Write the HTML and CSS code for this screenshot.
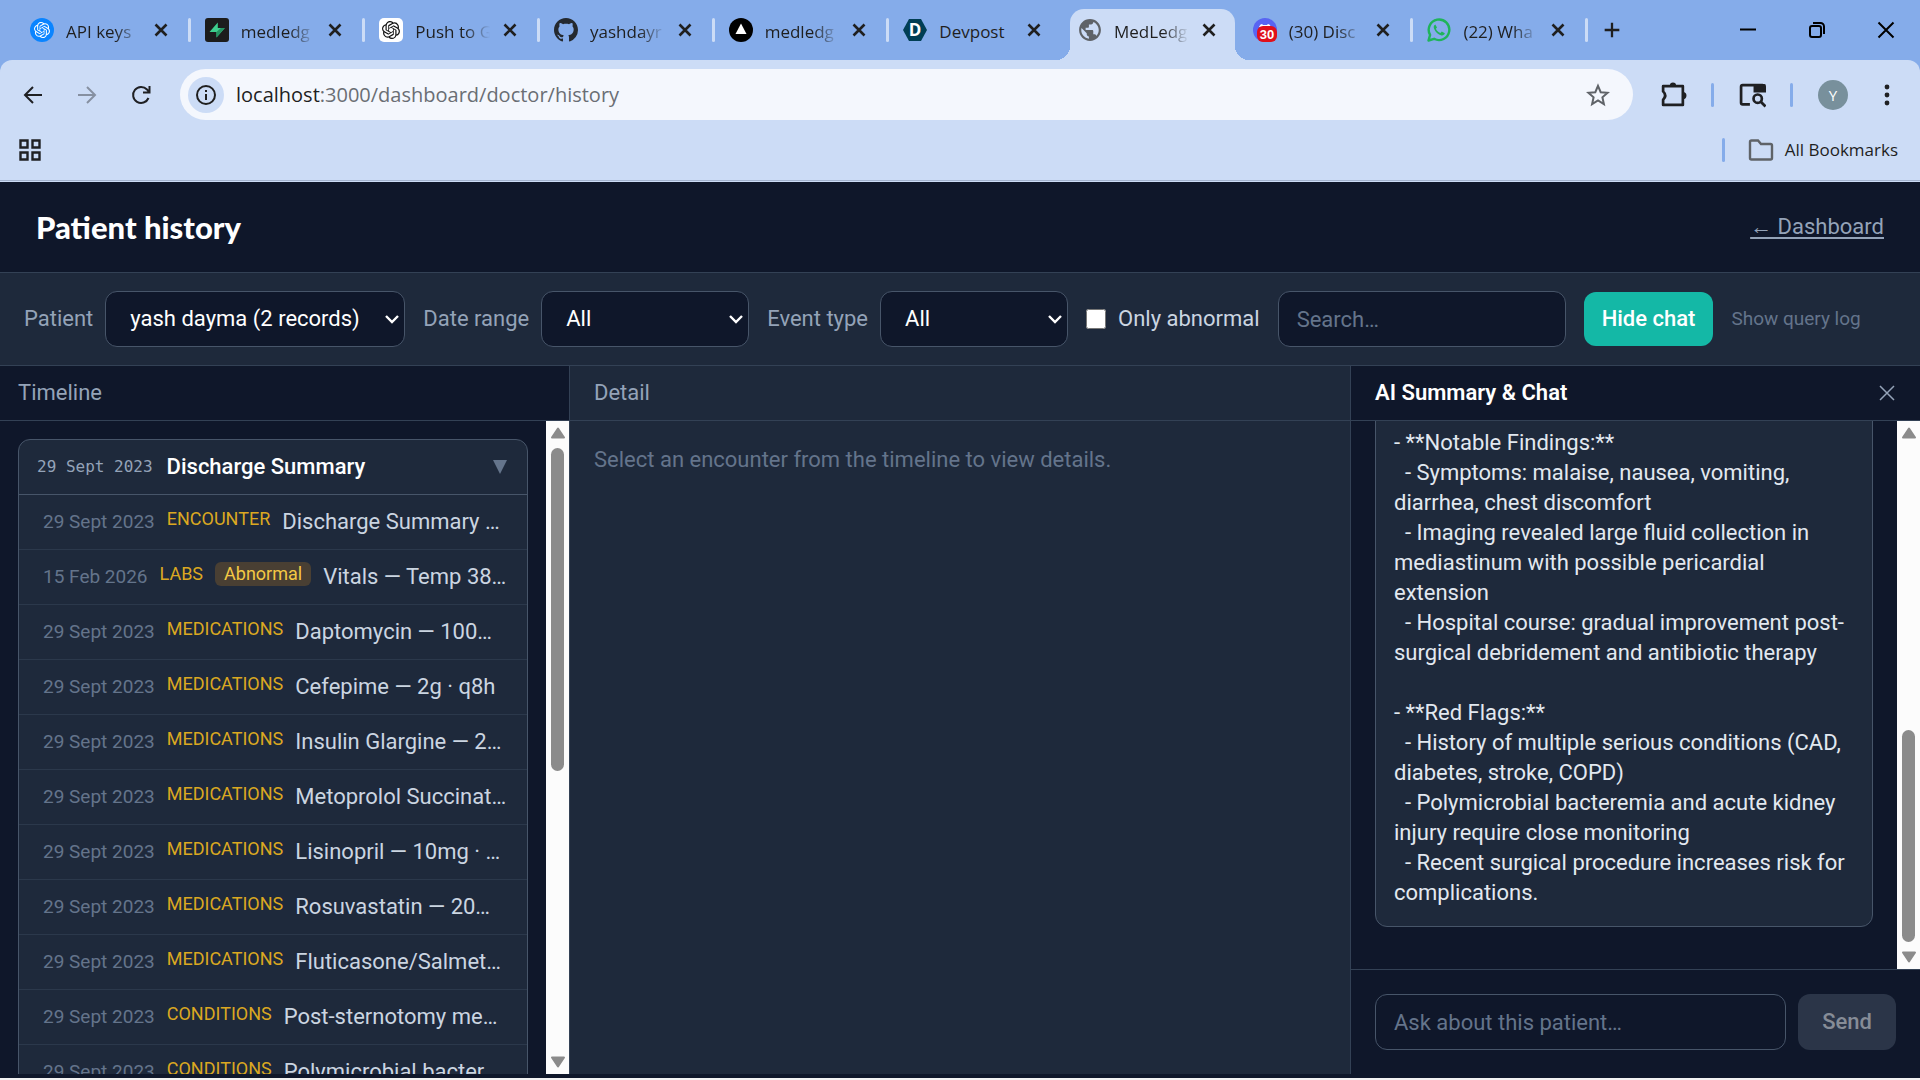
FILE: index.html
```html
<!DOCTYPE html>
<html lang="en">
<head>
    <meta charset="UTF-8">
    <meta name="viewport" content="width=device-width, initial-scale=1.0">
    <title>MedLedger</title>
    <link rel="stylesheet" href="styles.css">
</head>
<body>
    <!-- shared icon shapes -->
    <svg class="defs" aria-hidden="true">
        <symbol id="i-x" viewBox="0 0 24 24"><path d="M6.500 6.500l11 11M17.500 6.500l-11 11" fill="none" stroke="currentColor" stroke-width="2.600"/></symbol>
        <symbol id="i-openai" viewBox="0 0 24 24"><path fill="currentColor" d="M22.2819 9.8211a5.9847 5.9847 0 0 0-.5157-4.9108 6.0462 6.0462 0 0 0-6.5098-2.9A6.0651 6.0651 0 0 0 4.9807 4.1818a5.9847 5.9847 0 0 0-3.9977 2.9 6.0462 6.0462 0 0 0 .7427 7.0966 5.98 5.98 0 0 0 .511 4.9107 6.051 6.051 0 0 0 6.5146 2.9001A5.9847 5.9847 0 0 0 13.2599 24a6.0557 6.0557 0 0 0 5.7718-4.2058 5.9894 5.9894 0 0 0 3.9977-2.9001 6.0557 6.0557 0 0 0-.7475-7.0729zm-9.022 12.6081a4.4755 4.4755 0 0 1-2.8764-1.0408l.1419-.0804 4.7783-2.7582a.7948.7948 0 0 0 .3927-.6813v-6.7369l2.02 1.1686a.071.071 0 0 1 .038.052v5.5826a4.504 4.504 0 0 1-4.4945 4.4944zm-9.6607-4.1254a4.4708 4.4708 0 0 1-.5346-3.0137l.142.0852 4.783 2.7582a.7712.7712 0 0 0 .7806 0l5.8428-3.3685v2.3324a.0804.0804 0 0 1-.0332.0615L9.74 19.9502a4.4992 4.4992 0 0 1-6.1408-1.6464zM2.3408 7.8956a4.485 4.485 0 0 1 2.3655-1.9728V11.6a.7664.7664 0 0 0 .3879.6765l5.8144 3.3543-2.0201 1.1685a.0757.0757 0 0 1-.071 0l-4.8303-2.7865A4.504 4.504 0 0 1 2.3408 7.872zm16.5963 3.8558L13.1038 8.364 15.1192 7.2a.0757.0757 0 0 1 .071 0l4.8303 2.7913a4.4944 4.4944 0 0 1-.6765 8.1042v-5.6772a.79.79 0 0 0-.407-.667zm2.0107-3.0231l-.142-.0852-4.7735-2.7818a.7759.7759 0 0 0-.7854 0L9.409 9.2297V6.8974a.0662.0662 0 0 1 .0284-.0615l4.8303-2.7866a4.4992 4.4992 0 0 1 6.6802 4.66zM8.3065 12.863l-2.02-1.1638a.0804.0804 0 0 1-.038-.0567V6.0742a4.4992 4.4992 0 0 1 7.3757-3.4537l-.142.0805L8.704 5.459a.7948.7948 0 0 0-.3927.6813zm1.0976-2.3654l2.602-1.4998 2.6069 1.4998v2.9994l-2.5974 1.4997-2.6067-1.4997Z"/></symbol>
        <symbol id="i-up" viewBox="0 0 16 12"><path d="M8 1.500L14 10.500H2Z" fill="#8b8b8b" stroke="#8b8b8b" stroke-width="2" stroke-linejoin="round"/></symbol>
        <symbol id="i-down" viewBox="0 0 16 12"><path d="M8 10.500L14 1.500H2Z" fill="#8b8b8b" stroke="#8b8b8b" stroke-width="2" stroke-linejoin="round"/></symbol>
    </svg>

    <div class="browser">
        <div class="tab-strip">
            <div class="tabs">
                <div class="tab">
                    <svg class="favicon" viewBox="0 0 24 24"><circle cx="12" cy="12" r="12" fill="#0a84ff"/><use href="#i-openai" x="4" y="4" width="16" height="16" color="#fff"/></svg>
                    <span class="tab-title fade">API keys</span>
                    <button class="tab-close" aria-label="Close tab"><svg><use href="#i-x"/></svg></button>
                </div>
                <div class="tab">
                    <svg class="favicon" viewBox="0 0 24 24"><rect width="24" height="24" rx="3" fill="#1c1c1c"/><path d="M12.800 4.500v5.500h7L11.500 19.500V14H4.500Z" fill="#3ecf8e"/><path d="M11.500 14v5.500L19.800 10h-4Z" fill="#249361"/></svg>
                    <span class="tab-title fade">medledg</span>
                    <button class="tab-close" aria-label="Close tab"><svg><use href="#i-x"/></svg></button>
                </div>
                <div class="tab">
                    <svg class="favicon" viewBox="0 0 24 24"><rect width="24" height="24" rx="5" fill="#fff"/><use href="#i-openai" x="3" y="3" width="18" height="18" color="#111"/></svg>
                    <span class="tab-title fade">Push to G</span>
                    <button class="tab-close" aria-label="Close tab"><svg><use href="#i-x"/></svg></button>
                </div>
                <div class="tab">
                    <svg class="favicon" viewBox="0 0 16 16"><path fill="#24292f" d="M8 0C3.58 0 0 3.58 0 8c0 3.54 2.29 6.53 5.47 7.59.4.07.55-.17.55-.38 0-.19-.01-.82-.01-1.49-2.01.37-2.53-.49-2.69-.94-.09-.23-.48-.94-.82-1.13-.28-.15-.68-.52-.01-.53.63-.01 1.08.58 1.23.82.72 1.21 1.87.87 2.33.66.07-.52.28-.87.51-1.07-1.78-.2-3.64-.89-3.64-3.95 0-.87.31-1.59.82-2.15-.08-.2-.36-1.02.08-2.12 0 0 .67-.21 2.2.82.64-.18 1.32-.27 2-.27s1.36.09 2 .27c1.53-1.04 2.2-.82 2.2-.82.44 1.1.16 1.92.08 2.12.51.56.82 1.27.82 2.15 0 3.07-1.87 3.75-3.65 3.95.29.25.54.73.54 1.48 0 1.07-.01 1.93-.01 2.2 0 .21.15.46.55.38A8.01 8.01 0 0 0 16 8c0-4.42-3.58-8-8-8z"/></svg>
                    <span class="tab-title fade">yashdayr</span>
                    <button class="tab-close" aria-label="Close tab"><svg><use href="#i-x"/></svg></button>
                </div>
                <div class="tab">
                    <svg class="favicon" viewBox="0 0 24 24"><circle cx="12" cy="12" r="12"/><path d="M12 5.500l5.500 10.500h-11Z" fill="#fff"/></svg>
                    <span class="tab-title fade">medledg</span>
                    <button class="tab-close" aria-label="Close tab"><svg><use href="#i-x"/></svg></button>
                </div>
                <div class="tab before-active">
                    <svg class="favicon" viewBox="0 0 24 24"><path d="M6 1h12l6 11-6 11H6L0 12Z" fill="#003e54"/><text x="12" y="18" text-anchor="middle" class="devpost-d">D</text></svg>
                    <span class="tab-title">Devpost</span>
                    <button class="tab-close" aria-label="Close tab"><svg><use href="#i-x"/></svg></button>
                </div>
                <div class="tab active">
                    <svg class="favicon" viewBox="1 1 22 22"><path fill="#5f6368" d="M12 2C6.48 2 2 6.48 2 12s4.48 10 10 10 10-4.48 10-10S17.52 2 12 2zm-1 17.93c-3.95-.49-7-3.85-7-7.93 0-.62.08-1.21.21-1.79L9 15v1c0 1.1.9 2 2 2v1.93zm6.9-2.54c-.26-.81-1-1.39-1.9-1.39h-1v-3c0-.55-.45-1-1-1H8v-2h2c.55 0 1-.45 1-1V7h2c1.1 0 2-.9 2-2v-.41c2.93 1.19 5 4.06 5 7.41 0 2.08-.8 3.97-2.1 5.39z"/></svg>
                    <span class="tab-title fade">MedLedg</span>
                    <button class="tab-close" aria-label="Close tab"><svg><use href="#i-x"/></svg></button>
                </div>
                <div class="tab">
                    <svg class="favicon" viewBox="0 0 24 24"><circle cx="12" cy="12" r="12" fill="#5865f2"/><path d="M6 9q1-3 3-3l1 1h4l1-1q2 0 3 3Z" fill="#fff"/><rect x="4" y="8" width="20" height="16" rx="6" fill="#e0101b"/><text x="14" y="21" text-anchor="middle" class="badge-text">30</text></svg>
                    <span class="tab-title fade">(30) Disc</span>
                    <button class="tab-close" aria-label="Close tab"><svg><use href="#i-x"/></svg></button>
                </div>
                <div class="tab">
                    <svg class="favicon" viewBox="0 0 24 24"><path d="M1.500 22.500l1.600-5.600a10.300 10.300 0 1 1 4 3.900Z" fill="none" stroke="#1fb45a" stroke-width="2.400" stroke-linejoin="round"/><path d="M8.300 6.500c-1.500.6-1.900 2.300-1.300 4 1.300 3.400 4 6 7.500 6.900 1.600.3 3-.7 3.300-2.200l-3-1.600-1.400 1.500c-2.200-.9-3.600-2.300-4.500-4.300l1.100-1.400Z" fill="#1fb45a"/></svg>
                    <span class="tab-title fade">(22) Wha</span>
                    <button class="tab-close" aria-label="Close tab"><svg><use href="#i-x"/></svg></button>
                </div>
            </div>
            <button class="new-tab" aria-label="New tab"><svg viewBox="0 0 24 24"><path d="M12 4v16M4 12h16" stroke="#1f1f1f" stroke-width="2.500"/></svg></button>
            <div class="window-buttons">
                <button aria-label="Minimize"><svg viewBox="0 0 24 24"><path d="M4 11.500h16" stroke="#000" stroke-width="2"/></svg></button>
                <button aria-label="Restore"><svg viewBox="0 0 24 24" fill="none" stroke="#000" stroke-width="2"><rect x="5" y="8" width="11" height="11" rx="2"/><path d="M8 5h7.500a3.500 3.500 0 0 1 3.500 3.500V16"/></svg></button>
                <button aria-label="Close"><svg viewBox="0 0 24 24"><path d="M4.500 4.500l15 15M19.500 4.500l-15 15" stroke="#000" stroke-width="2"/></svg></button>
            </div>
        </div>

        <div class="toolbar">
            <div class="nav-row">
                <button class="nav-btn" aria-label="Back"><svg viewBox="0 0 24 24"><path d="M21 12H4M12 4l-8 8 8 8"/></svg></button>
                <button class="nav-btn disabled" aria-label="Forward"><svg viewBox="0 0 24 24"><path d="M3 12h17M12 4l8 8-8 8"/></svg></button>
                <button class="nav-btn" aria-label="Reload"><svg viewBox="0 0 24 24"><path d="M19.500 15A8 8 0 1 1 18 6.500l2 2.500M20.500 3v6.500H14"/></svg></button>
                <div class="omnibox">
                    <span class="site-info"><svg viewBox="0 0 24 24" fill="none" stroke="#1f1f1f" stroke-width="2"><circle cx="12" cy="12" r="9"/><path d="M12 11v6M12 7v2"/></svg></span>
                    <span class="url"><b>localhost</b>:3000/dashboard/doctor/history</span>
                    <svg class="star" viewBox="0 0 24 24"><path d="M12 2.800l2.700 6.400 6.900.6-5.200 4.500 1.500 6.800-5.900-3.600-5.900 3.600 1.500-6.800L2.400 9.800l6.900-.6Z" fill="none" stroke="#5f6368" stroke-width="2"/></svg>
                </div>
                <button class="ext-btn" aria-label="Extensions"><svg viewBox="0 0 26 26"><path d="M3 5h19v18H3v-5q4-4 0-8Z" fill="none" stroke="#1f2023" stroke-width="2.600" stroke-linejoin="round"/><path d="M9.500 4.500a3 3 0 0 1 6 0ZM22 10.500a3.500 3.500 0 0 1 0 7Z" fill="#1f2023"/></svg></button>
                <span class="bar"></span>
                <button class="ext-btn" aria-label="Search tabs"><svg viewBox="0 0 26 26" fill="none" stroke="#1f2023" stroke-width="2.600"><path d="M10.500 22.500H3.500a1.500 1.500 0 0 1-1.500-1.500V5.500A1.500 1.500 0 0 1 3.500 4H23"/><path d="M14 3h10.500q1.500 0 1.500 2v6H14Z" fill="#1f2023" stroke="none"/><circle cx="18" cy="17" r="4"/><path d="M21 20l4.500 4.500"/></svg></button>
                <span class="bar"></span>
                <span class="avatar">Y</span>
                <button class="menu-btn" aria-label="Menu"><svg viewBox="0 0 24 24" fill="#1f2023"><circle cx="12" cy="4" r="2.400"/><circle cx="12" cy="12" r="2.400"/><circle cx="12" cy="20" r="2.400"/></svg></button>
            </div>
            <div class="bookmarks-row">
                <button class="apps" aria-label="Apps"><svg viewBox="0 0 22 22" fill="none" stroke="#1f2023" stroke-width="2.400"><path d="M1.500 1.500h7v7h-7ZM13.500 1.500h7v7h-7ZM1.500 13.500h7v7h-7ZM13.500 13.500h7v7h-7Z"/></svg></button>
                <span class="bar"></span>
                <button class="all-bookmarks"><svg viewBox="0 0 26 24"><path d="M2 20V4a1.500 1.500 0 0 1 1.500-1.500h6.500l3 3.500h9.500A1.500 1.500 0 0 1 24 7.500V20a1.500 1.500 0 0 1-1.500 1.500h-19A1.500 1.500 0 0 1 2 20Z" fill="none" stroke="#5f6368" stroke-width="2.400"/></svg>All Bookmarks</button>
            </div>
        </div>
    </div>

    <header class="page-header">
        <h1>Patient history</h1>
        <a href="#">← Dashboard</a>
    </header>

    <div class="filters">
        <div class="field">
            <label for="patient">Patient</label>
            <select id="patient" class="w-patient"><option>yash dayma (2 records)</option></select>
        </div>
        <div class="field">
            <label for="range">Date range</label>
            <select id="range" class="w-range"><option>All</option></select>
        </div>
        <div class="field">
            <label for="event">Event type</label>
            <select id="event" class="w-event"><option>All</option></select>
        </div>
        <label class="check"><input type="checkbox"> Only abnormal</label>
        <input type="text" class="search" placeholder="Search…" aria-label="Search">
        <button class="hide-chat">Hide chat</button>
        <button class="query-log">Show query log</button>
    </div>

    <main class="columns">
        <section class="timeline">
            <h2>Timeline</h2>
            <div class="scroll-area">
                <div class="timeline-list">
                    <div class="encounter">
                        <button class="encounter-head">
                            <time>29 Sept 2023</time>
                            <span>Discharge Summary</span>
                            <svg viewBox="0 0 14 14"><path d="M0 0h14L7 14Z" fill="#64748b"/></svg>
                        </button>
                        <div class="event"><time>29 Sept 2023</time><span class="kind">Encounter</span><span class="name">Discharge Summary …</span></div>
                        <div class="event"><time>15 Feb 2026</time><span class="kind">Labs</span><span class="abnormal">Abnormal</span><span class="name">Vitals — Temp 38…</span></div>
                        <div class="event"><time>29 Sept 2023</time><span class="kind">Medications</span><span class="name">Daptomycin — 100…</span></div>
                        <div class="event"><time>29 Sept 2023</time><span class="kind">Medications</span><span class="name">Cefepime — 2g · q8h</span></div>
                        <div class="event"><time>29 Sept 2023</time><span class="kind">Medications</span><span class="name">Insulin Glargine — 2…</span></div>
                        <div class="event"><time>29 Sept 2023</time><span class="kind">Medications</span><span class="name">Metoprolol Succinat…</span></div>
                        <div class="event"><time>29 Sept 2023</time><span class="kind">Medications</span><span class="name">Lisinopril — 10mg · …</span></div>
                        <div class="event"><time>29 Sept 2023</time><span class="kind">Medications</span><span class="name">Rosuvastatin — 20…</span></div>
                        <div class="event"><time>29 Sept 2023</time><span class="kind">Medications</span><span class="name">Fluticasone/Salmet…</span></div>
                        <div class="event"><time>29 Sept 2023</time><span class="kind">Conditions</span><span class="name">Post-sternotomy me…</span></div>
                        <div class="event"><time>29 Sept 2023</time><span class="kind">Conditions</span><span class="name">Polymicrobial bacter…</span></div>
                    </div>
                </div>
                <div class="scrollbar timeline-bar"><svg><use href="#i-up"/></svg><div class="track"><div class="thumb"></div></div><svg><use href="#i-down"/></svg></div>
            </div>
        </section>

        <section class="detail">
            <h2>Detail</h2>
            <p>Select an encounter from the timeline to view details.</p>
        </section>

        <section class="chat">
            <div class="chat-head">
                <h2>AI Summary &amp; Chat</h2>
                <button aria-label="Close chat"><svg viewBox="0 0 16 16"><path d="M1 1l14 14M15 1L1 15" stroke="#94a3b8" stroke-width="1.500"/></svg></button>
            </div>
            <div class="scroll-area">
                <div class="messages">
                    <div class="message">- **Notable Findings:**
  - Symptoms: malaise, nausea, vomiting,
diarrhea, chest discomfort
  - Imaging revealed large fluid collection in
mediastinum with possible pericardial
extension
  - Hospital course: gradual improvement post-
surgical debridement and antibiotic therapy

- **Red Flags:**
  - History of multiple serious conditions (CAD,
diabetes, stroke, COPD)
  - Polymicrobial bacteremia and acute kidney
injury require close monitoring
  - Recent surgical procedure increases risk for
complications.</div>
                </div>
                <div class="scrollbar chat-bar"><svg><use href="#i-up"/></svg><div class="track"><div class="thumb"></div></div><svg><use href="#i-down"/></svg></div>
            </div>
            <form class="ask">
                <input type="text" placeholder="Ask about this patient…" aria-label="Ask about this patient">
                <button type="button" disabled>Send</button>
            </form>
        </section>
    </main>
    <div class="bottom-edge"></div>
</body>
</html>
```

FILE: styles.css
```css
* {
    box-sizing: border-box;
}
body {
    margin: 0;
    height: 100vh;
    display: flex;
    flex-direction: column;
    overflow: hidden;
    background: #0f172a;
    color: #e2e8f0;
    font-family: Roboto, 'Liberation Sans', sans-serif;
    font-size: 22px;
    line-height: 30px;
}
button, input, select {
    font: inherit;
    color: inherit;
}
button {
    padding: 0;
    border: none;
    background: none;
    cursor: pointer;
}
svg {
    display: block;
    flex: none;
}
.defs {
    position: absolute;
    width: 0;
    height: 0;
}

/* Browser window */
.browser {
    background: #85acea;
    color: #1f1f1f;
    font-family: 'Open Sans', 'Noto Sans', sans-serif;
    font-size: 17px;
}
.tab-strip {
    height: 60px;
    display: flex;
    align-items: center;
    padding-left: 15px;
}
.tabs {
    flex: 1;
    min-width: 0;
    display: flex;
    height: 60px;
}
.tab {
    flex: 1 1 0;
    min-width: 0;
    display: flex;
    align-items: center;
    padding: 0 17px 0 15px;
    position: relative;
}
.tab::after {
    content: '';
    position: absolute;
    right: -1px;
    top: 18px;
    width: 3px;
    height: 24px;
    border-radius: 2px;
    background: #ccdcf6;
}
.tab.before-active::after {
    display: none;
}
.tab.active {
    z-index: 0;
}
.tab.active::before {
    content: '';
    position: absolute;
    z-index: -1;
    inset: 9px 3px 0 7px;
    border-radius: 14px 14px 0 0;
    background: #ccdcf6;
}
/* curved feet of the active tab */
.tab.active::after {
    z-index: -1;
    top: auto;
    left: -7px;
    right: -11px;
    bottom: 0;
    width: auto;
    height: 14px;
    border-radius: 0;
    background:
        radial-gradient(circle at 0 0, transparent 14px, #ccdcf6 14px) left / 14px 14px no-repeat,
        radial-gradient(circle at 100% 0, transparent 14px, #ccdcf6 14px) right / 14px 14px no-repeat;
}
.favicon {
    width: 24px;
    height: 24px;
}
.devpost-d {
    font: bold 17px 'Open Sans', sans-serif;
    fill: #fff;
}
.badge-text {
    font: bold 13px 'Liberation Sans', sans-serif;
    fill: #fff;
}
.tab-title {
    flex: 1;
    min-width: 0;
    margin: 3px 4px 0 12px;
    white-space: nowrap;
}
.fade {
    -webkit-mask-image: linear-gradient(to left, transparent 4px, #000 30px);
    mask-image: linear-gradient(to left, transparent 4px, #000 30px);
}
.tab-close svg {
    width: 24px;
    height: 24px;
}
.new-tab {
    flex: none;
    width: 50px;
    display: flex;
    justify-content: center;
}
.new-tab svg {
    width: 22px;
    height: 22px;
}
.window-buttons {
    flex: none;
    display: flex;
    width: 283px;
    padding-left: 76px;
}
.window-buttons button {
    flex: 1;
    display: flex;
    justify-content: center;
}
.window-buttons svg {
    width: 24px;
    height: 24px;
}
.toolbar {
    height: 122px;
    padding-top: 9px;
    border-radius: 12px 12px 0 0;
    border-bottom: 1px solid #ccdcf6;
    background: #ccdcf6;
    box-shadow: inset 0 -1px #a3b3ce;
}
.nav-row {
    display: flex;
    align-items: center;
    height: 51px;
    padding: 0 21px 0 6px;
}
.nav-btn {
    width: 54px;
    display: flex;
    justify-content: center;
}
.nav-btn svg {
    width: 24px;
    height: 24px;
    fill: none;
    stroke: #1f2023;
    stroke-width: 2;
}
.nav-btn.disabled {
    opacity: 0.4;
}
.omnibox {
    flex: 1;
    display: flex;
    align-items: center;
    height: 51px;
    margin: 0 27px 0 12px;
    padding: 0 23px 0 8px;
    border-radius: 26px;
    background: #f4f7fd;
    font-size: 20px;
}
.site-info {
    display: flex;
    align-items: center;
    justify-content: center;
    width: 36px;
    height: 36px;
    margin-right: 12px;
    border-radius: 50%;
    background: #ccdcf6;
}
.site-info svg {
    width: 24px;
    height: 24px;
}
.url {
    flex: 1;
    color: #6a6e74;
}
.url b {
    font-weight: normal;
    color: #1f1f1f;
}
.star {
    width: 24px;
    height: 24px;
}
.ext-btn svg {
    width: 27px;
    height: 27px;
}
.bar {
    width: 3px;
    height: 24px;
    border-radius: 2px;
    background: #85acea;
}
.nav-row .bar {
    margin: 0 25px 0 24px;
}
.avatar {
    width: 30px;
    height: 30px;
    border-radius: 50%;
    background: #78909c;
    color: #fff;
    font-size: 15px;
    text-align: center;
}
.menu-btn {
    margin-left: 27px;
}
.menu-btn svg {
    width: 24px;
    height: 24px;
}
.bookmarks-row {
    display: flex;
    align-items: center;
    height: 60px;
    padding: 0 22px 0 19px;
}
.apps {
    margin-right: auto;
}
.apps svg {
    width: 22px;
    height: 22px;
}
.all-bookmarks {
    display: flex;
    align-items: center;
    gap: 11px;
    margin-left: 23px;
}
.all-bookmarks svg {
    width: 26px;
    height: 24px;
}

/* Page */
.page-header {
    display: flex;
    align-items: center;
    justify-content: space-between;
    height: 91px;
    padding: 0 36px;
    border-bottom: 1px solid #334155;
}
h1 {
    margin: 0;
    font-family: Lato, sans-serif;
    font-size: 31px;
    font-weight: 900;
    color: #fff;
}
.page-header a {
    color: #94a3b8;
    text-underline-offset: 3px;
}
.filters {
    display: flex;
    align-items: center;
    gap: 18px;
    padding: 18px 24px;
    border-bottom: 1px solid #334155;
    background: #1e293b;
    white-space: nowrap;
}
.field, .check {
    display: flex;
    align-items: center;
    gap: 12px;
}
.field label {
    color: #94a3b8;
}
.check {
    color: #cbd5e1;
}
.check input {
    width: 20px;
    height: 20px;
    margin: 0;
}
select, .search, .ask input {
    height: 56px;
    border: 1px solid #475569;
    border-radius: 12px;
    background: #0f172a;
    color: #fff;
}
select {
    appearance: none;
    padding: 0 24px;
    background: #0f172a url("data:image/svg+xml,%3Csvg xmlns='http://www.w3.org/2000/svg' width='14' height='10'%3E%3Cpath d='M1 2l6 6 6-6' fill='none' stroke='white' stroke-width='2.400'/%3E%3C/svg%3E") no-repeat right 5px center;
}
.w-patient {
    width: 300px;
}
.w-range {
    width: 208px;
}
.w-event {
    width: 188px;
}
.search, .ask input {
    padding: 0 18px;
}
.search {
    width: 288px;
}
::placeholder {
    color: #64748b;
    opacity: 1;
}
.hide-chat {
    height: 54px;
    padding: 0 18px;
    border-radius: 12px;
    background: #14b8a6;
    color: #fff;
    font-weight: 500;
}
.query-log {
    color: #64748b;
    font-size: 19px;
}

.columns {
    flex: 1;
    min-height: 0;
    display: grid;
    grid-template-columns: 570px 1fr 570px;
    grid-template-rows: minmax(0, 1fr);
}
.timeline, .chat {
    display: flex;
    flex-direction: column;
    min-height: 0;
}
h2 {
    margin: 0;
    padding: 12px 24px;
    border-bottom: 1px solid #334155;
    color: #94a3b8;
    font-size: 22px;
    font-weight: 400;
}
.timeline {
    border-right: 1px solid #334155;
}
.timeline h2 {
    padding-left: 18px;
}
.scroll-area {
    flex: 1;
    min-height: 0;
    display: flex;
}
.timeline-list {
    flex: 1;
    padding: 18px;
    overflow: hidden;
}
.encounter {
    border: 1px solid #475569;
    border-radius: 12px;
    background: #1e293b;
}
.encounter-head {
    display: flex;
    align-items: center;
    gap: 14px;
    width: 100%;
    height: 55px;
    padding: 0 20px 0 18px;
    border-bottom: 1px solid #475569;
    color: #fff;
    font-weight: 500;
}
.encounter-head time {
    color: #94a3b8;
    font-family: 'DejaVu Sans Mono', monospace;
    font-size: 16px;
    font-weight: normal;
}
.encounter-head svg {
    width: 14px;
    height: 14px;
    margin-left: auto;
}
.event {
    display: flex;
    align-items: flex-start;
    gap: 12px;
    height: 55px;
    padding: 12px 18px 12px 24px;
    border-bottom: 1px solid #2b384b;
    white-space: nowrap;
}
.event time {
    color: #64748b;
    font-size: 19px;
}
.kind {
    color: #dba821;
    font-size: 18px;
    line-height: 24px;
    text-transform: uppercase;
}
.abnormal {
    padding: 0 9px;
    border-radius: 6px;
    background: #493f33;
    color: #f3c944;
    font-size: 18px;
    line-height: 24px;
}
.name {
    color: #cbd5e1;
}

.scrollbar {
    width: 23px;
    display: flex;
    flex-direction: column;
    align-items: center;
    justify-content: space-between;
    padding: 6px 0;
    background: #fcfcfc;
}
.scrollbar svg {
    width: 16px;
    height: 12px;
}
.track {
    flex: 1;
    margin: 9px 0;
}
.thumb {
    width: 13px;
    border-radius: 7px;
    background: #8b8b8b;
}
.timeline-bar .thumb {
    height: 54%;
}
.chat-bar .track {
    display: flex;
    align-items: flex-end;
}
.chat-bar .thumb {
    height: 43%;
}

.detail {
    background: #1e293b;
}
.detail p {
    margin: 24px;
    color: #64748b;
}

.chat {
    border-left: 1px solid #334155;
}
.chat-head {
    display: flex;
    align-items: center;
    justify-content: space-between;
    padding-right: 25px;
    border-bottom: 1px solid #334155;
}
.chat-head h2 {
    border: none;
    color: #fff;
    font-weight: 600;
}
.chat-head svg {
    width: 16px;
    height: 16px;
}
.messages {
    flex: 1;
    display: flex;
    flex-direction: column;
    justify-content: flex-end;
    padding: 0 24px 42px;
    overflow: hidden;
}
.message {
    padding: 18px;
    border: 1px solid #475569;
    border-radius: 12px;
    background: #1e293b;
    white-space: pre;
}
.ask {
    display: flex;
    gap: 12px;
    padding: 24px;
    border-top: 1px solid #334155;
}
.ask input {
    flex: 1;
    min-width: 0;
}
.ask button {
    width: 98px;
    border-radius: 12px;
    background: #2b3548;
    color: #868c97;
    font-weight: 500;
}
.bottom-edge {
    height: 6px;
    border-bottom: 2px solid #f3f3f3;
}
```
